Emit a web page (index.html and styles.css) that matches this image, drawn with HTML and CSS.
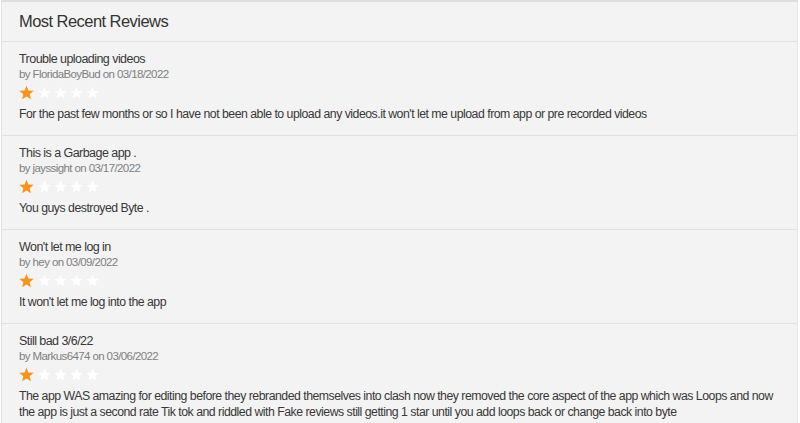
FILE: index.html
```html
<!DOCTYPE html>
<html>
<head>
<meta charset="utf-8">
<link rel="stylesheet" href="styles.css">
</head>
<body>
<svg width="0" height="0" class="defs">
  <defs>
    <polygon id="star" points="12,1 15.1,8.6 23.4,9.3 17.1,14.7 19,22.8 12,18.5 5,22.8 6.9,14.7 0.6,9.3 8.9,8.6"/>
  </defs>
</svg>
<div class="panel">
  <div class="header">Most Recent Reviews</div>

  <div class="review">
    <div class="title">Trouble uploading videos</div>
    <div class="by">by FloridaBoyBud on 03/18/2022</div>
    <div class="stars">
      <svg class="star on" viewBox="0 0 24 24"><use href="#star"/></svg>
      <svg class="star" viewBox="0 0 24 24"><use href="#star"/></svg>
      <svg class="star" viewBox="0 0 24 24"><use href="#star"/></svg>
      <svg class="star" viewBox="0 0 24 24"><use href="#star"/></svg>
      <svg class="star" viewBox="0 0 24 24"><use href="#star"/></svg>
    </div>
    <div class="text">For the past few months or so I have not been able to upload any videos.it won't let me upload from app or pre recorded videos</div>
  </div>

  <div class="review">
    <div class="title">This is a Garbage app .</div>
    <div class="by">by jayssight on 03/17/2022</div>
    <div class="stars">
      <svg class="star on" viewBox="0 0 24 24"><use href="#star"/></svg>
      <svg class="star" viewBox="0 0 24 24"><use href="#star"/></svg>
      <svg class="star" viewBox="0 0 24 24"><use href="#star"/></svg>
      <svg class="star" viewBox="0 0 24 24"><use href="#star"/></svg>
      <svg class="star" viewBox="0 0 24 24"><use href="#star"/></svg>
    </div>
    <div class="text">You guys destroyed Byte .</div>
  </div>

  <div class="review">
    <div class="title">Won't let me log in</div>
    <div class="by">by hey on 03/09/2022</div>
    <div class="stars">
      <svg class="star on" viewBox="0 0 24 24"><use href="#star"/></svg>
      <svg class="star" viewBox="0 0 24 24"><use href="#star"/></svg>
      <svg class="star" viewBox="0 0 24 24"><use href="#star"/></svg>
      <svg class="star" viewBox="0 0 24 24"><use href="#star"/></svg>
      <svg class="star" viewBox="0 0 24 24"><use href="#star"/></svg>
    </div>
    <div class="text">It won't let me log into the app</div>
  </div>

  <div class="review">
    <div class="title">Still bad 3/6/22</div>
    <div class="by">by Markus6474 on 03/06/2022</div>
    <div class="stars">
      <svg class="star on" viewBox="0 0 24 24"><use href="#star"/></svg>
      <svg class="star" viewBox="0 0 24 24"><use href="#star"/></svg>
      <svg class="star" viewBox="0 0 24 24"><use href="#star"/></svg>
      <svg class="star" viewBox="0 0 24 24"><use href="#star"/></svg>
      <svg class="star" viewBox="0 0 24 24"><use href="#star"/></svg>
    </div>
    <div class="text">The app WAS amazing for editing before they rebranded themselves into clash now they removed the core aspect of the app which was Loops and now the app is just a second rate Tik tok and riddled with Fake reviews still getting 1 star until you add loops back or change back into byte</div>
  </div>
</div>
</body>
</html>
```

FILE: styles.css
```css
html, body {
  margin: 0;
  padding: 0;
  background: #ffffff;
  font-family: "Liberation Sans", Arial, sans-serif;
  color: #333333;
}

.defs {
  position: absolute;
  width: 0;
  height: 0;
}

.panel {
  margin-left: 1px;
  margin-right: 2px;
  background: #f3f3f3;
  border-top: 2px solid #dedede;
  border-left: 1px solid #e2e2e2;
  border-right: 1px solid #e8e8e8;
  height: 421px;
  overflow: hidden;
}

.header {
  height: 39px;
  line-height: 39px;
  padding-left: 17px;
  font-size: 16.5px;
  letter-spacing: -0.55px;
  color: #333333;
  border-bottom: 1px solid #e2e2e2;
}

.review {
  padding: 10px 17px 13px;
  border-bottom: 1px solid #e2e2e2;
}

.title {
  font-size: 12.5px;
  letter-spacing: -0.55px;
  line-height: 15px;
  color: #383838;
}

.by {
  font-size: 11.5px;
  letter-spacing: -0.6px;
  line-height: 14px;
  color: #808080;
}

.stars {
  display: flex;
  align-items: center;
  gap: 3px;
  height: 14px;
  margin-top: 4px;
}

.star {
  width: 13px;
  height: 13px;
  fill: #ffffff;
}

.star.on {
  width: 15px;
  height: 15px;
  fill: #f7941d;
  margin-right: 1px;
}

.text {
  margin-top: 7px;
  font-size: 12.3px;
  letter-spacing: -0.5px;
  line-height: 16px;
  color: #383838;
}
```
